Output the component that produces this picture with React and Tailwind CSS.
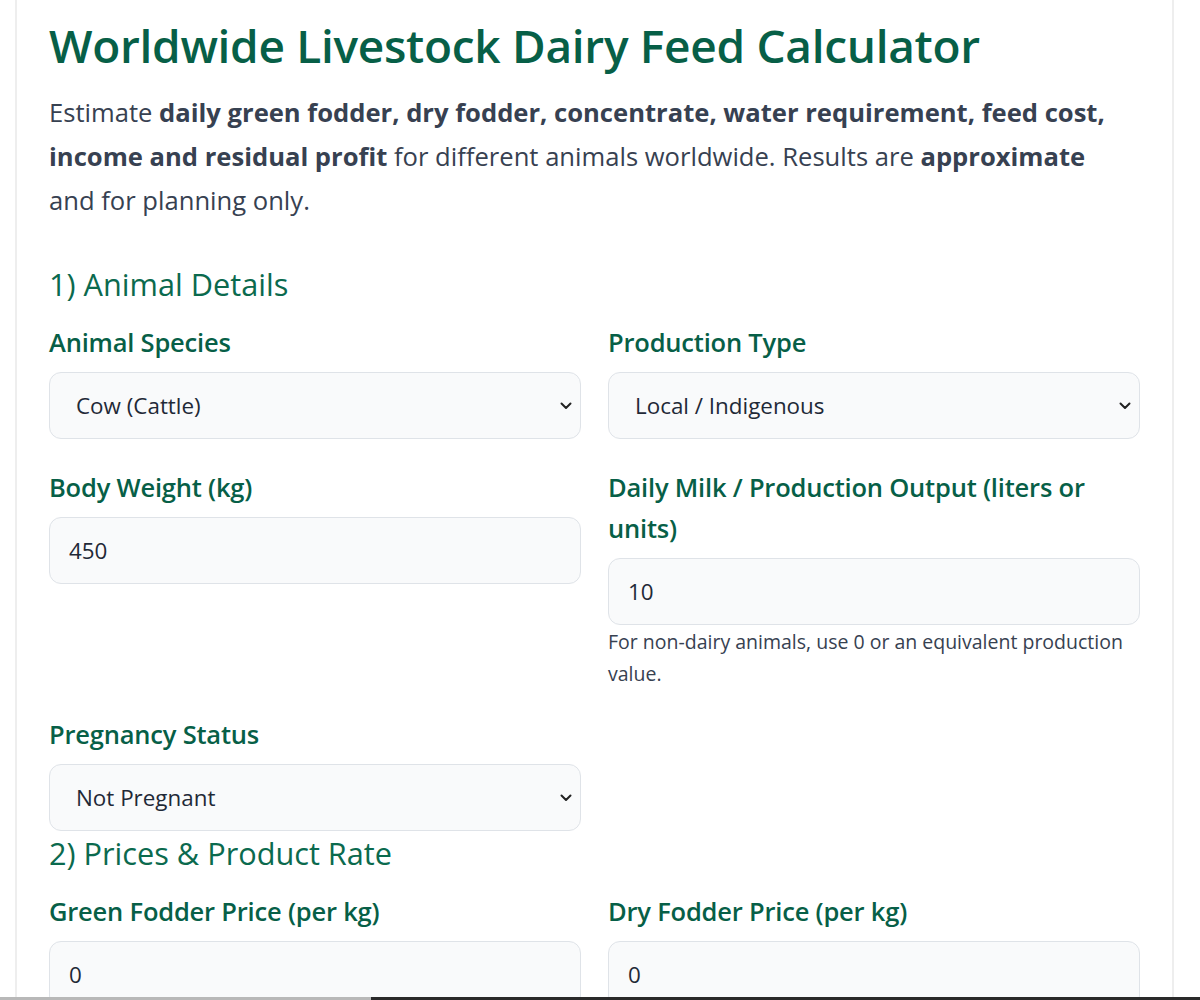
import React from "react";

const font = { fontFamily: '"Open Sans", "Noto Sans", Arial, sans-serif' };

function Chevron() {
  return (
    <svg className="pointer-events-none absolute right-[9px] top-1/2 -translate-y-1/2" width="12" height="8" viewBox="0 0 12 8" fill="none">
      <path d="M1.5 1.5 L6 6 L10.5 1.5" stroke="#222" strokeWidth="2" strokeLinecap="round" strokeLinejoin="round" />
    </svg>
  );
}

function Label({ children }) {
  return (
    <label className="block text-[25.5px] font-semibold leading-[41px] text-[#075f47] mb-[9px] tracking-[-0.2px]">{children}</label>
  );
}

function SelectField({ label, value, options }) {
  return (
    <div>
      <Label>{label}</Label>
      <div className="relative">
        <select
          defaultValue={value}
          className="block w-full h-[67px] appearance-none rounded-[12px] border border-[#dfe3e8] bg-[#f9fafb] pl-[26px] pr-10 text-[22.4px] text-[#1f2937] outline-none"
        >
          {options.map((o) => (
            <option key={o}>{o}</option>
          ))}
        </select>
        <Chevron />
      </div>
    </div>
  );
}

function InputField({ label, value, help }) {
  return (
    <div>
      <Label>{label}</Label>
      <input
        type="number"
        defaultValue={value}
        className="block w-full h-[67px] rounded-[12px] border border-[#dfe3e8] bg-[#f9fafb] px-[19px] text-[22.4px] text-[#1f2937] outline-none"
      />
      {help && (
        <p className="mt-[1px] text-[19.5px] leading-[32px] text-[#374151]">{help}</p>
      )}
    </div>
  );
}

export default function App() {
  return (
    <div className="min-h-screen bg-white" style={font}>
      <div className="ml-[15px] w-[1159px] border-x-2 border-[#eeeeee] px-[32px] pt-[16px] pb-10">
        <h1 className="text-[46px] font-semibold leading-[58px] text-[#075f47] tracking-[-0.3px]">
          Worldwide Livestock Dairy Feed Calculator
        </h1>
        <p className="mt-[17px] max-w-[1075px] text-[25.6px] leading-[44px] text-[#374151]">
          Estimate <b className="font-bold">daily green fodder, dry fodder, concentrate, water requirement, feed cost, income and residual profit</b> for different animals worldwide. Results are <b className="font-bold">approximate</b> and for planning only.
        </p>

        <h2 className="mt-[43px] mb-[20px] text-[30.7px] font-normal leading-[36px] text-[#0b6a4e]">1) Animal Details</h2>
        <div className="grid grid-cols-2 gap-x-[27px] gap-y-[28px] items-start">
          <SelectField label="Animal Species" value="Cow (Cattle)" options={["Cow (Cattle)", "Buffalo", "Goat", "Sheep", "Camel"]} />
          <SelectField label="Production Type" value="Local / Indigenous" options={["Local / Indigenous", "Crossbred", "High Yielding"]} />
          <InputField label="Body Weight (kg)" value="450" />
          <InputField
            label="Daily Milk / Production Output (liters or units)"
            value="10"
            help="For non-dairy animals, use 0 or an equivalent production value."
          />
          <div className="-mt-[4px]">
            <SelectField label="Pregnancy Status" value="Not Pregnant" options={["Not Pregnant", "Pregnant"]} />
          </div>
        </div>

        <h2 className="mt-[4px] mb-[20px] text-[30.7px] font-normal leading-[36px] text-[#0b6a4e]">2) Prices &amp; Product Rate</h2>
        <div className="grid grid-cols-2 gap-x-[27px] gap-y-[28px] items-start">
          <InputField label="Green Fodder Price (per kg)" value="0" />
          <InputField label="Dry Fodder Price (per kg)" value="0" />
          <InputField label="Concentrate Price (per kg)" value="0" />
          <InputField label="Milk / Product Rate (per liter or unit)" value="0" />
        </div>
      </div>
      <div className="fixed bottom-0 left-0 right-0 flex h-[3px]">
        <div className="w-[371px] bg-[#b8b8b8]" />
        <div className="flex-1 bg-[#2a2a2a]" />
      </div>
    </div>
  );
}
